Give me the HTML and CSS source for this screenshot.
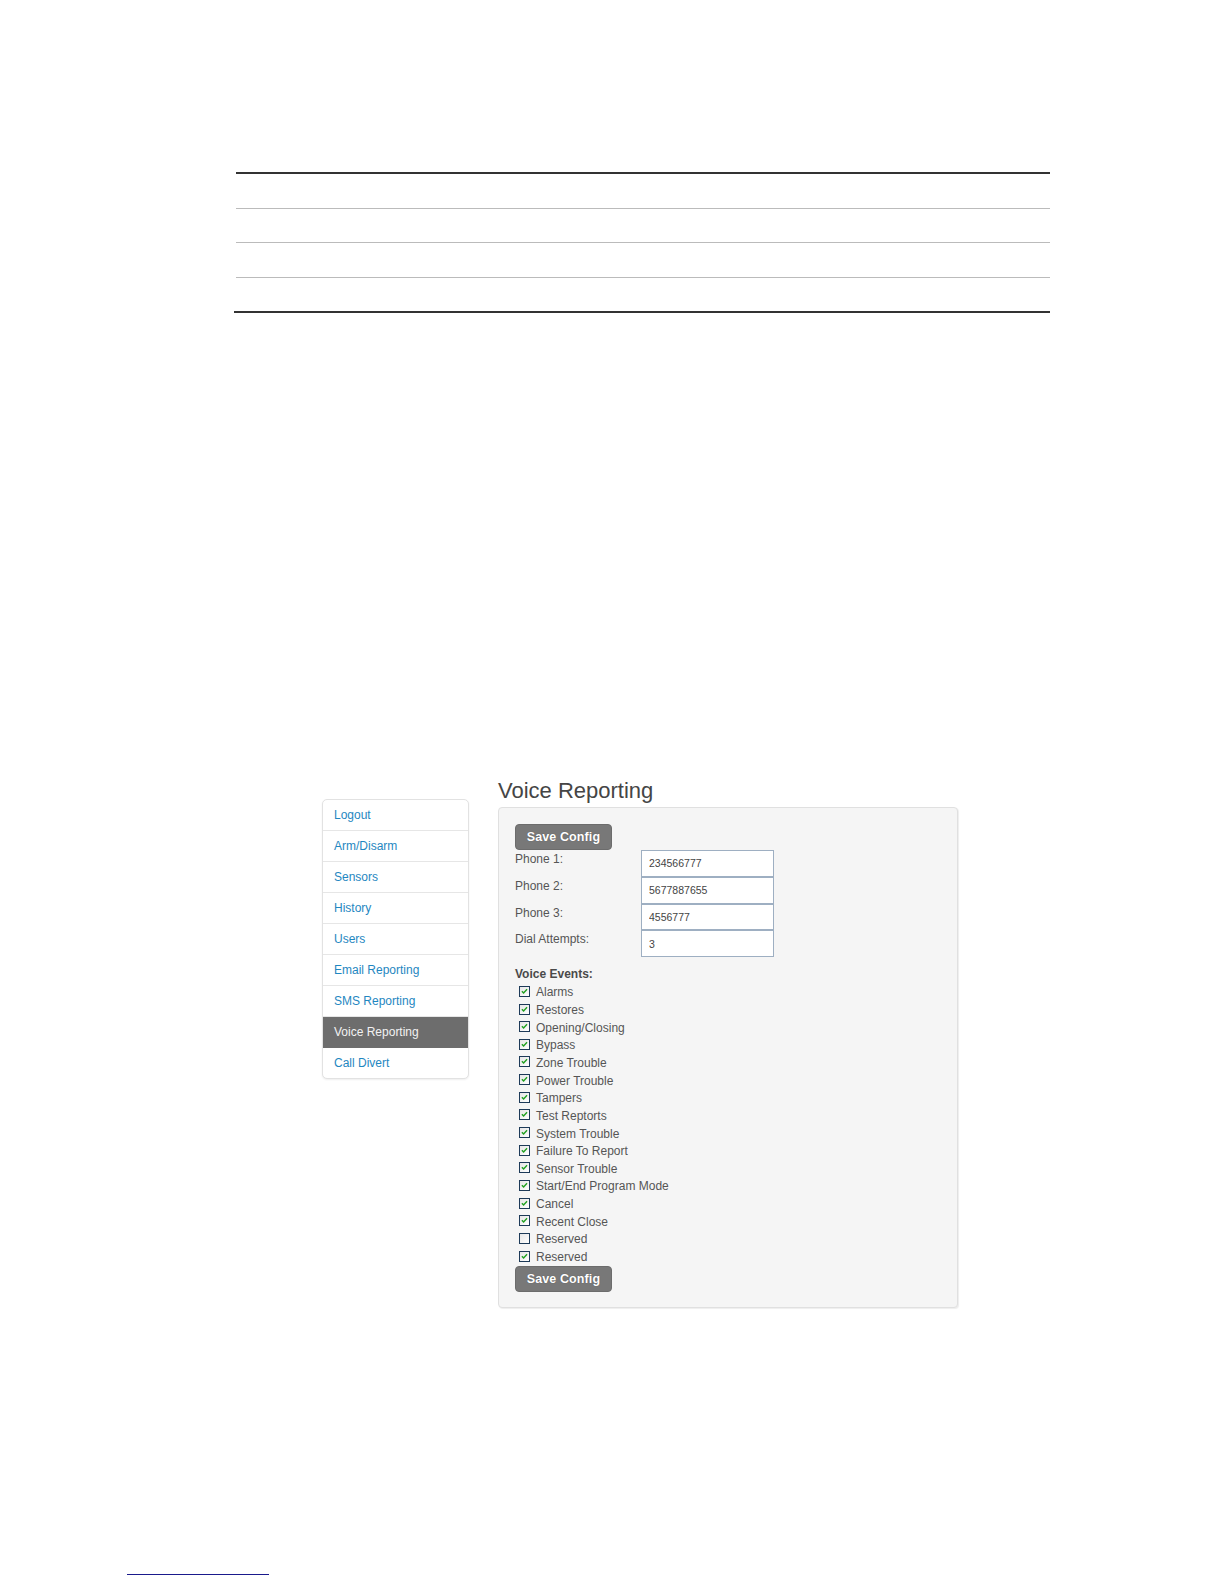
FILE: index.html
```html
<!DOCTYPE html>
<html lang="en">
<head>
<meta charset="utf-8">
<title>Voice Reporting</title>
<link rel="stylesheet" href="styles.css">
</head>
<body>
<div class="page">
  <div class="doc-table">
    <div class="doc-row"></div>
    <div class="doc-row"></div>
    <div class="doc-row"></div>
    <div class="doc-row"></div>
  </div>

  <div class="shot">
    <nav class="sidenav">
      <a class="nav-item">Logout</a>
      <a class="nav-item">Arm/Disarm</a>
      <a class="nav-item">Sensors</a>
      <a class="nav-item">History</a>
      <a class="nav-item">Users</a>
      <a class="nav-item">Email Reporting</a>
      <a class="nav-item">SMS Reporting</a>
      <a class="nav-item active">Voice Reporting</a>
      <a class="nav-item">Call Divert</a>
    </nav>

    <main class="content">
      <h2 class="title">Voice Reporting</h2>
      <div class="well">
        <button class="btn">Save Config</button>
        <div class="form-grid">
          <label class="lbl">Phone 1:</label><input class="field" type="text" value="234566777">
          <label class="lbl">Phone 2:</label><input class="field" type="text" value="5677887655">
          <label class="lbl">Phone 3:</label><input class="field" type="text" value="4556777">
          <label class="lbl">Dial Attempts:</label><input class="field" type="text" value="3">
        </div>
        <div class="events-title">Voice Events:</div>
        <ul class="events">
          <li><span class="cb on"><svg viewBox="0 0 11 11"><path d="M2.3 5.2 L4.4 7.4 L8.6 2.8"/></svg></span>Alarms</li>
          <li><span class="cb on"><svg viewBox="0 0 11 11"><path d="M2.3 5.2 L4.4 7.4 L8.6 2.8"/></svg></span>Restores</li>
          <li><span class="cb on"><svg viewBox="0 0 11 11"><path d="M2.3 5.2 L4.4 7.4 L8.6 2.8"/></svg></span>Opening/Closing</li>
          <li><span class="cb on"><svg viewBox="0 0 11 11"><path d="M2.3 5.2 L4.4 7.4 L8.6 2.8"/></svg></span>Bypass</li>
          <li><span class="cb on"><svg viewBox="0 0 11 11"><path d="M2.3 5.2 L4.4 7.4 L8.6 2.8"/></svg></span>Zone Trouble</li>
          <li><span class="cb on"><svg viewBox="0 0 11 11"><path d="M2.3 5.2 L4.4 7.4 L8.6 2.8"/></svg></span>Power Trouble</li>
          <li><span class="cb on"><svg viewBox="0 0 11 11"><path d="M2.3 5.2 L4.4 7.4 L8.6 2.8"/></svg></span>Tampers</li>
          <li><span class="cb on"><svg viewBox="0 0 11 11"><path d="M2.3 5.2 L4.4 7.4 L8.6 2.8"/></svg></span>Test Reptorts</li>
          <li><span class="cb on"><svg viewBox="0 0 11 11"><path d="M2.3 5.2 L4.4 7.4 L8.6 2.8"/></svg></span>System Trouble</li>
          <li><span class="cb on"><svg viewBox="0 0 11 11"><path d="M2.3 5.2 L4.4 7.4 L8.6 2.8"/></svg></span>Failure To Report</li>
          <li><span class="cb on"><svg viewBox="0 0 11 11"><path d="M2.3 5.2 L4.4 7.4 L8.6 2.8"/></svg></span>Sensor Trouble</li>
          <li><span class="cb on"><svg viewBox="0 0 11 11"><path d="M2.3 5.2 L4.4 7.4 L8.6 2.8"/></svg></span>Start/End Program Mode</li>
          <li><span class="cb on"><svg viewBox="0 0 11 11"><path d="M2.3 5.2 L4.4 7.4 L8.6 2.8"/></svg></span>Cancel</li>
          <li><span class="cb on"><svg viewBox="0 0 11 11"><path d="M2.3 5.2 L4.4 7.4 L8.6 2.8"/></svg></span>Recent Close</li>
          <li><span class="cb"></span>Reserved</li>
          <li><span class="cb on"><svg viewBox="0 0 11 11"><path d="M2.3 5.2 L4.4 7.4 L8.6 2.8"/></svg></span>Reserved</li>
        </ul>
        <button class="btn">Save Config</button>
      </div>
    </main>
  </div>

  <div class="footnote-rule"></div>
</div>
</body>
</html>
```

FILE: styles.css
```css
html, body {
  margin: 0;
  padding: 0;
  background: #ffffff;
}

body {
  font-family: "Liberation Sans", Arial, sans-serif;
  font-size: 12px;
  color: #555555;
}

.page {
  padding-top: 172px;
  padding-bottom: 8px;
}

/* document table (empty rows) */
.doc-table {
  margin-left: 236px;
  width: 814px;
  border-top: 2px solid #333333;
}

.doc-row {
  height: 33.5px;
  border-bottom: 1px solid #bbbbbb;
}

.doc-row:last-child {
  border-bottom: 2px solid #333333;
  margin-left: -2px;
  padding-left: 2px;
}

/* screenshot section */
.shot {
  display: flex;
  align-items: flex-start;
  gap: 29px;
  margin-top: 465px;
  margin-left: 322px;
}

.sidenav {
  display: flex;
  flex-direction: column;
  width: 145px;
  margin-top: 21px;
  border: 1px solid #e2e2e2;
  border-radius: 5px;
  background: #ffffff;
  box-shadow: 0 1px 2px rgba(0, 0, 0, 0.07);
  overflow: hidden;
}

.nav-item {
  display: block;
  height: 30px;
  line-height: 30px;
  padding-left: 11px;
  color: #1f87c1;
  border-bottom: 1px solid #e6e6e6;
  font-size: 12px;
  white-space: nowrap;
}

.nav-item:last-child {
  border-bottom: none;
}

.nav-item.active {
  background: #6d6d6d;
  color: #f2f2f2;
  border-bottom-color: #6d6d6d;
}

.content {
  width: 460px;
}

.title {
  margin: 0 0 4px 0;
  font-size: 22px;
  line-height: 25px;
  font-weight: normal;
  color: #454545;
}

.well {
  background: #f5f5f5;
  border: 1px solid #e0e0e0;
  border-radius: 4px;
  padding: 16px 16px 15px 16px;
  box-shadow: 1px 1px 1px rgba(0, 0, 0, 0.07);
}

.btn {
  display: block;
  width: 97px;
  height: 26px;
  padding: 0;
  margin: 0;
  background: #787878;
  border: 1px solid #6c6c6c;
  border-radius: 4px;
  color: #ffffff;
  font-family: "Liberation Sans", Arial, sans-serif;
  font-size: 12.5px;
  font-weight: bold;
  text-shadow: 0 0 1px rgba(0, 0, 0, 0.35);
  letter-spacing: 0.1px;
}

.form-grid {
  display: grid;
  grid-template-columns: 126px 133px;
  grid-auto-rows: 26.75px;
}

.lbl {
  padding-top: 1px;
  line-height: 17px;
  color: #555555;
  font-size: 12px;
}

.field {
  box-sizing: border-box;
  width: 133px;
  height: 26.75px;
  margin: 0;
  padding: 0 0 0 7px;
  border: 1px solid #9eafc2;
  background: #ffffff;
  font-family: "Liberation Sans", Arial, sans-serif;
  font-size: 10.5px;
  color: #444444;
  outline: none;
}

.events-title {
  margin-top: 9px;
  line-height: 17.6px;
  font-weight: bold;
  color: #4a4a4a;
}

.events {
  list-style: none;
  margin: 0;
  padding: 0;
}

.events li {
  display: flex;
  align-items: center;
  height: 17.65px;
  padding-left: 4px;
  color: #555555;
  white-space: nowrap;
}

.cb {
  box-sizing: border-box;
  display: inline-block;
  width: 11px;
  height: 11px;
  margin-right: 6px;
  border: 1px solid #1d3a58;
  background: linear-gradient(135deg, #e6e6e6, #ffffff);
  position: relative;
  top: -1px;
}

.cb svg {
  display: block;
  width: 9px;
  height: 9px;
}

.cb svg path {
  fill: none;
  stroke: #20a020;
  stroke-width: 1.7;
}

.footnote-rule {
  margin-top: 266px;
  margin-left: 127px;
  width: 142px;
  height: 1px;
  background: #1a1a8c;
}
```
